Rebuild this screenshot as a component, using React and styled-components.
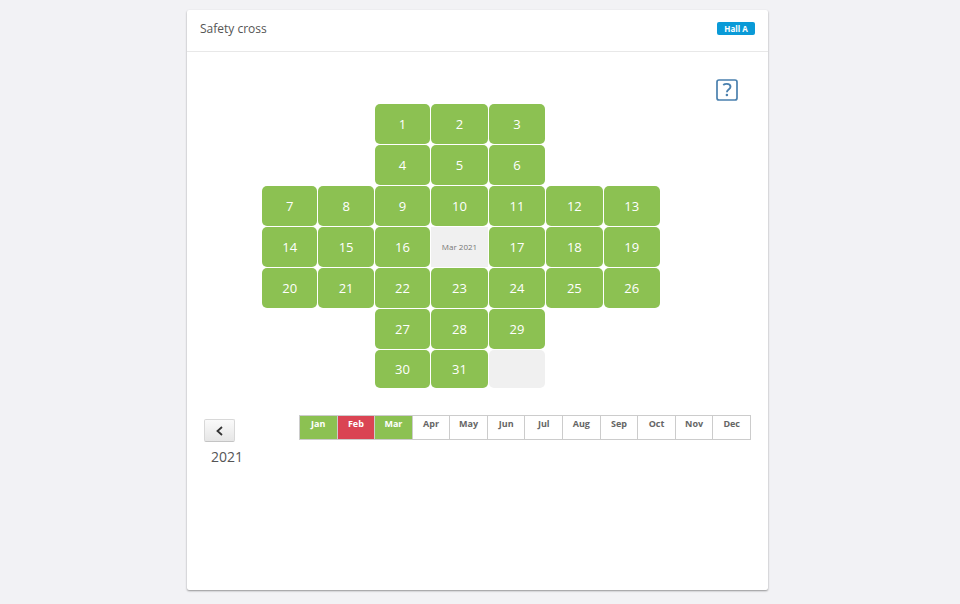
import React, { useState } from 'react';
import styled, { createGlobalStyle } from 'styled-components';

const GlobalStyle = createGlobalStyle`
  * {
    box-sizing: border-box;
  }

  body {
    margin: 0;
    background: #f2f2f5;
    color: #666;
    font-family: 'Open Sans', 'Noto Sans', sans-serif;
  }

  button {
    font-family: inherit;
    cursor: pointer;
  }
`;

const Page = styled.main`
  display: grid;
  grid-template-columns: 187fr 581fr 192fr;
  min-height: 100vh;
  padding: 10px 0 14px;
`;

const Card = styled.section`
  grid-column: 2;
  background: #fff;
  border-radius: 2px;
  box-shadow: 0 1px 2px rgba(0, 0, 0, 0.4);
`;

const CardHeader = styled.header`
  display: flex;
  align-items: center;
  justify-content: space-between;
  height: 42px;
  padding: 0 13px 4px;
  border-bottom: 1px solid #e8e8e8;

  h1 {
    margin: 0;
    color: #555;
    font-size: 12px;
    line-height: 16px;
    font-weight: 400;
  }
`;

const HallBadge = styled.span`
  min-width: 38px;
  padding: 0 7px;
  border-radius: 2px;
  background: #0a9ad7;
  color: #fff;
  font-size: 8px;
  line-height: 13px;
  font-weight: 700;
  text-align: center;
`;

const Toolbar = styled.div`
  display: flex;
  justify-content: flex-end;
  padding: 27px 30px 3px;
`;

const HelpButton = styled.button`
  display: block;
  padding: 0;
  border: none;
  background: none;
  color: #4a80ae;

  svg {
    display: block;
  }
`;

const Cross = styled.div`
  display: grid;
  grid-template-columns: repeat(3, 55fr) repeat(4, 56fr);
  grid-template-rows: repeat(6, 40px) 38px;
  gap: 1px;
  padding: 0 108px 0 75px;
`;

const Day = styled.button`
  grid-column: ${(p) => p.$column};
  grid-row: ${(p) => p.$row};
  padding: 0;
  border: none;
  border-radius: 5px;
  background: #8cc152;
  color: #fff;
  font-size: 13px;
`;

const BlankDay = styled.div`
  grid-column: ${(p) => p.$column};
  grid-row: ${(p) => p.$row};
  display: flex;
  align-items: center;
  justify-content: center;
  border-radius: ${(p) => (p.$center ? '0' : '5px')};
  background: #f0f0f0;
  color: #777;
  font-size: 8px;
  line-height: 10px;
`;

const Timeline = styled.div`
  display: flex;
  gap: 57px;
  padding: 27px 17px 0;
`;

const YearPicker = styled.div`
  display: flex;
  flex-direction: column;
  width: 38px;
  padding-top: 4px;

  span {
    margin-top: 4px;
    padding-left: 7px;
    color: #555;
    font-size: 14px;
    line-height: 22px;
  }
`;

const PrevButton = styled.button`
  display: flex;
  align-items: center;
  justify-content: center;
  width: 31px;
  height: 23px;
  padding: 0;
  border: 1px solid #d8d8d8;
  border-bottom-color: #c4c4c4;
  border-radius: 2px;
  background: linear-gradient(#fafafa, #e6e6e6);
  color: #333;
`;

const Months = styled.div`
  display: grid;
  flex: 1;
  grid-template-columns: repeat(12, 1fr);
  height: 25px;
  border: 1px solid #ccc;
  border-left: none;
`;

const statusColors = {
  safe: '#8cc152',
  incident: '#da4453',
};

const Month = styled.button`
  display: flex;
  justify-content: center;
  padding: 2px 0 0;
  border: none;
  border-left: 1px solid #ccc;
  background: ${(p) => statusColors[p.$status] || '#fff'};
  color: ${(p) => (p.$status ? '#fff' : '#666')};
  font-size: 9px;
  line-height: 12px;
  font-weight: 700;
`;

// First and last column filled in each row of the cross
const crossRows = [
  [3, 5],
  [3, 5],
  [1, 7],
  [1, 7],
  [1, 7],
  [3, 5],
  [3, 5],
];

const months = ['Jan', 'Feb', 'Mar', 'Apr', 'May', 'Jun', 'Jul', 'Aug', 'Sep', 'Oct', 'Nov', 'Dec'];
const monthStatus = { Jan: 'safe', Feb: 'incident', Mar: 'safe' };
const daysInMonth = 31;

const buildCells = () => {
  const cells = [];
  let day = 1;
  crossRows.forEach(([from, to], index) => {
    for (let column = from; column <= to; column++) {
      const row = index + 1;
      // The middle cell shows the month instead of a day
      const isCenter = row === 4 && column === 4;
      const value = !isCenter && day <= daysInMonth ? day++ : null;
      cells.push({ row, column, isCenter, value });
    }
  });
  return cells;
};

const cells = buildCells();

const App = () => {
  const [month, setMonth] = useState('Mar');
  const [year, setYear] = useState(2021);

  return (
    <>
      <GlobalStyle />
      <Page>
        <Card>
          <CardHeader>
            <h1>Safety cross</h1>
            <HallBadge>Hall A</HallBadge>
          </CardHeader>
          <Toolbar>
            <HelpButton type="button" aria-label="Help">
              <svg width="22" height="22" viewBox="0 0 22 22" fill="none" stroke="currentColor">
                <rect x="1" y="1" width="20" height="20" rx="2" strokeWidth="1.7" />
                <path d="M7.2 6C8.2 5.2 9.5 4.900 10.800 4.900c2.300 0 3.700 1.100 3.700 2.900 0 2.800-3.600 2.800-3.600 5.400" strokeWidth="1.900" />
                <circle cx="10.900" cy="16" r="1.300" fill="currentColor" stroke="none" />
              </svg>
            </HelpButton>
          </Toolbar>
          <Cross>
            {cells.map(({ row, column, isCenter, value }) =>
              value ? (
                <Day key={`${row}-${column}`} type="button" $row={row} $column={column}>
                  {value}
                </Day>
              ) : (
                <BlankDay key={`${row}-${column}`} $row={row} $column={column} $center={isCenter}>
                  {isCenter && `${month} ${year}`}
                </BlankDay>
              )
            )}
          </Cross>
          <Timeline>
            <YearPicker>
              <PrevButton type="button" aria-label="Previous year" onClick={() => setYear(year - 1)}>
                <svg width="8" height="10" viewBox="0 0 8 10" fill="none" stroke="currentColor" strokeWidth="1.8">
                  <path d="M6 1 1.500 5 6 9" />
                </svg>
              </PrevButton>
              <span>{year}</span>
            </YearPicker>
            <Months>
              {months.map((name) => (
                <Month key={name} type="button" $status={monthStatus[name]} onClick={() => setMonth(name)}>
                  {name}
                </Month>
              ))}
            </Months>
          </Timeline>
        </Card>
      </Page>
    </>
  );
};

export default App;
